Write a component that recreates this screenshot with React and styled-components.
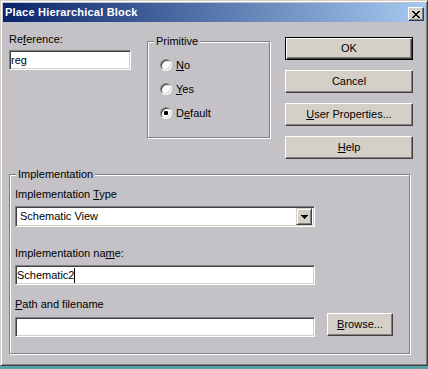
import styled, { createGlobalStyle } from "styled-components";

const GlobalStyle = createGlobalStyle`
  html, body {
    margin: 0;
    padding: 0;
    background: #56a0a8;
  }
  body {
    font-family: "Liberation Sans", Arial, sans-serif;
    font-size: 11px;
    color: #000;
  }
`

const Window = styled.div`
  box-sizing: border-box;
  width: 428px;
  height: 366px;
  padding: 2px;
  display: flex;
  flex-direction: column;
  background: #c4c2c6;
  border: 1px solid;
  border-color: #d4d0c8 #404040 #404040 #d4d0c8;
  box-shadow: inset 1px 1px #fff, inset -1px -1px #808080;
`

const TitleBar = styled.div`
  height: 19px;
  display: flex;
  align-items: center;
  justify-content: space-between;
  padding: 0 1px 0 2px;
  background: linear-gradient(to right, #0a246a, #a6caf0);
`

const Title = styled.span`
  color: #fff;
  font-weight: bold;
  font-size: 11px;
  letter-spacing: 0.2px;
  line-height: 13px;
`

const CloseButton = styled.div`
  box-sizing: border-box;
  width: 16px;
  height: 14px;
  margin-top: 3px;
  display: flex;
  align-items: center;
  justify-content: center;
  background: #d4d0c8;
  border: 1px solid;
  border-color: #fff #404040 #404040 #fff;
  box-shadow: inset -1px -1px #808080;
  svg { display: block; margin: 0 0 0 0; }
`

const Body = styled.div`
  flex: 1;
  padding: 11px 0 0 6px;
`

const TopRow = styled.div`
  display: flex;
  align-items: flex-start;
`

const RefColumn = styled.div`
  width: 122px;
  display: flex;
  flex-direction: column;
  gap: 4px;
`

const Label = styled.div`
  line-height: 13px;
  height: 13px;
  white-space: nowrap;
  margin-top: ${(p) => p.$mt || 0}px;
`

const Field = styled.div`
  box-sizing: border-box;
  width: ${(p) => p.$w || 300}px;
  height: ${(p) => p.$h || 20}px;
  margin-top: ${(p) => p.$mt || 0}px;
  padding: 0 1px;
  display: flex;
  align-items: center;
  background: #fff;
  border: 1px solid;
  border-color: #808080 #fff #fff #808080;
  box-shadow: inset 1px 1px #404040, inset -1px -1px #d4d0c8;
  line-height: 13px;
  white-space: nowrap;
  span { padding-left: 2px; }
`

const Caret = styled.i`
  display: inline-block;
  width: 1px;
  height: 15px;
  background: #000;
`

const Select = styled(Field)`
  height: 21px;
  padding: 2px 2px 2px 2px;
  justify-content: space-between;
  span { padding-left: 2px; }
`

const DropButton = styled.div`
  box-sizing: border-box;
  width: 16px;
  height: 17px;
  display: flex;
  align-items: center;
  justify-content: center;
  background: #d4d0c8;
  border: 1px solid;
  border-color: #d4d0c8 #404040 #404040 #d4d0c8;
  box-shadow: inset 1px 1px #fff, inset -1px -1px #808080;
`

const Group = styled.div`
  position: relative;
  box-sizing: border-box;
  width: ${(p) => p.$w}px;
  height: ${(p) => p.$h}px;
  margin: ${(p) => p.$m};
  padding: ${(p) => p.$pad};
  border: 1px solid #808080;
  box-shadow: inset 1px 1px #fff, 1px 1px #fff;
`

const Legend = styled.span`
  position: absolute;
  top: -7px;
  left: 6px;
  padding: 0 2px;
  line-height: 13px;
  background: #c4c2c6;
`

const RadioList = styled.div`
  display: flex;
  flex-direction: column;
  gap: 12px;
`

const RadioRow = styled.div`
  height: 12px;
  display: flex;
  align-items: center;
  gap: 4px;
  line-height: 13px;
`

const RadioCircle = styled.span`
  box-sizing: border-box;
  width: 12px;
  height: 12px;
  border-radius: 50%;
  display: flex;
  align-items: center;
  justify-content: center;
  background: #fff;
  border: 1px solid;
  border-color: #808080 #fff #fff #808080;
  box-shadow: inset 1px 1px #404040, inset -1px -1px #d4d0c8;
  &::after {
    content: "";
    width: 4px;
    height: 4px;
    border-radius: 1px;
    background: ${(p) => (p.$checked ? "#000" : "transparent")};
  }
`

const ButtonColumn = styled.div`
  margin: 4px 0 0 15px;
  display: flex;
  flex-direction: column;
  gap: 10px;
`

const Button = styled.div`
  box-sizing: border-box;
  width: ${(p) => p.$w || 128}px;
  height: 23px;
  display: flex;
  align-items: center;
  justify-content: center;
  background: #d4d0c8;
  line-height: 13px;
  border: 1px solid;
  border-color: ${(p) => (p.$default ? "#000" : "#fff #404040 #404040 #fff")};
  box-shadow: ${(p) =>
    p.$default
      ? "inset 1px 1px #fff, inset -1px -1px #404040, inset -2px -2px #808080"
      : "inset -1px -1px #808080"};
`

const Column = styled.div`
  display: flex;
  flex-direction: column;
`

const PathRow = styled.div`
  display: flex;
  align-items: flex-start;
  gap: 12px;
  margin-top: 2px;
`

const CloseGlyph = () => (
  <svg width="8" height="7" viewBox="0 0 8 7" shapeRendering="crispEdges">
    <path
      fill="#000"
      d="M0 0h2v1H0z M6 0h2v1H6z M1 1h2v1H1z M5 1h2v1H5z M2 2h4v1H2z M3 3h2v1H3z M2 4h4v1H2z M1 5h2v1H1z M5 5h2v1H5z M0 6h2v1H0z M6 6h2v1H6z"
    />
  </svg>
)

const DownArrow = () => (
  <svg width="7" height="4" viewBox="0 0 7 4" shapeRendering="crispEdges">
    <path fill="#000" d="M0 0h7v1H0z M1 1h5v1H1z M2 2h3v1H2z M3 3h1v1H3z" />
  </svg>
)

const App = () => {
  const radios = [
    { label: <><u>N</u>o</>, checked: false },
    { label: <><u>Y</u>es</>, checked: false },
    { label: <>D<u>e</u>fault</>, checked: true },
  ]

  return (
    <>
      <GlobalStyle />
      <Window>
        <TitleBar>
          <Title>Place Hierarchical Block</Title>
          <CloseButton><CloseGlyph /></CloseButton>
        </TitleBar>
        <Body>
          <TopRow>
            <RefColumn>
              <Label>Re<u>f</u>erence:</Label>
              <Field $w={122}>reg</Field>
            </RefColumn>

            <Group $w={123} $h={97} $m="8px 0 0 16px" $pad="17px 0 0 12px">
              <Legend>Primitive</Legend>
              <RadioList>
                {radios.map((r, i) => (
                  <RadioRow key={i}>
                    <RadioCircle $checked={r.checked} />
                    <span>{r.label}</span>
                  </RadioRow>
                ))}
              </RadioList>
            </Group>

            <ButtonColumn>
              <Button $default>OK</Button>
              <Button>Cancel</Button>
              <Button><span><u>U</u>ser Properties...</span></Button>
              <Button><span><u>H</u>elp</span></Button>
            </ButtonColumn>
          </TopRow>

          <Group $w={401} $h={180} $m="15px 0 0 0" $pad="13px 0 0 5px">
            <Legend>Implementation</Legend>
            <Column>
              <Label>Implementation <u>T</u>ype</Label>
              <Select $mt={5}>
                <span>Schematic View</span>
                <DropButton><DownArrow /></DropButton>
              </Select>
              <Label $mt={20}>Implementation na<u>m</u>e:</Label>
              <Field $mt={5}>Schematic2<Caret /></Field>
              <Label $mt={13}><u>P</u>ath and filename</Label>
              <PathRow>
                <Field $mt={4} />
                <Button $w={66}><span><u>B</u>rowse...</span></Button>
              </PathRow>
            </Column>
          </Group>
        </Body>
      </Window>
    </>
  )
}

export default App
